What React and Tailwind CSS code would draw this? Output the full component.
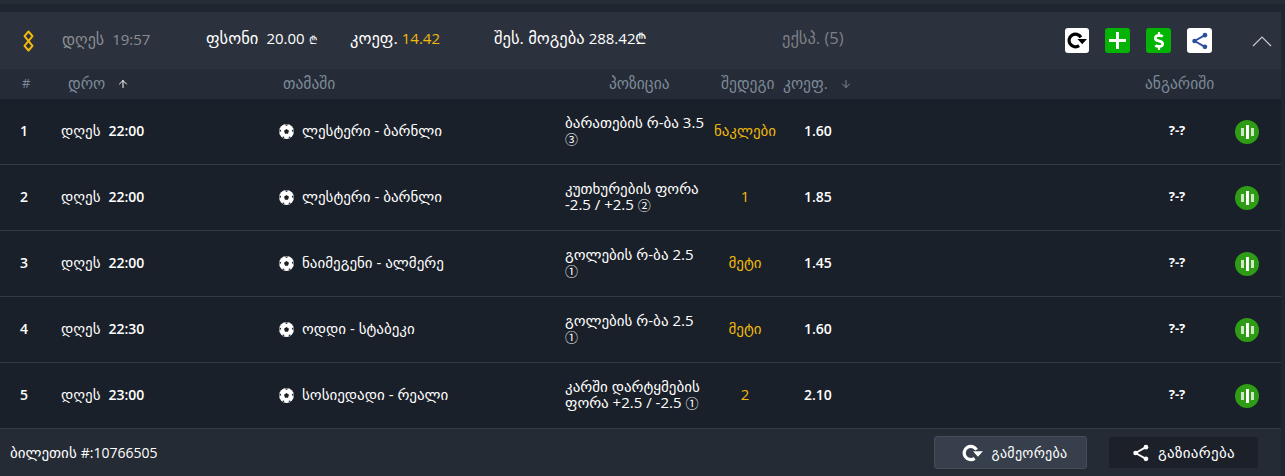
import React from 'react';
import { FaDollarSign } from 'react-icons/fa';
import { ArrowUp, ArrowDown } from 'lucide-react';

const rows = [
  { n: 1, day: 'დღეს', time: '22:00', game: 'ლესტერი - ბარნლი', pos: 'ბარათების რ-ბა 3.5\n', mark: '③', result: 'ნაკლები', odds: '1.60' },
  { n: 2, day: 'დღეს', time: '22:00', game: 'ლესტერი - ბარნლი', pos: 'კუთხურების ფორა\n-2.5 / +2.5 ', mark: '②', result: '1', odds: '1.85' },
  { n: 3, day: 'დღეს', time: '22:00', game: 'ნაიმეგენი - ალმერე', pos: 'გოლების რ-ბა 2.5\n', mark: '①', result: 'მეტი', odds: '1.45' },
  { n: 4, day: 'დღეს', time: '22:30', game: 'ოდდი - სტაბეკი', pos: 'გოლების რ-ბა 2.5\n', mark: '①', result: 'მეტი', odds: '1.60' },
  { n: 5, day: 'დღეს', time: '23:00', game: 'სოსიედადი - რეალი', pos: 'კარში დარტყმების\nფორა +2.5 / -2.5 ', mark: '①', result: '2', odds: '2.10' },
];

const Logo = () => (
  <svg width="13" height="22" viewBox="0 0 13 22" fill="none" stroke="#f0b90b" strokeWidth="2" strokeLinejoin="round">
    <path d="M6.5 1.5 L10.5 6.2 L2.5 15.8 L6.5 20.5 L10.5 15.8 L2.5 6.2 Z" />
  </svg>
);

const Bars = () => (
  <svg width="13" height="14" viewBox="0 0 13 14">
    <rect x="0" y="3" width="3" height="8" fill="#cfe6c8" />
    <rect x="5" y="0" width="3" height="14" fill="#ffffff" />
    <rect x="10" y="3" width="3" height="8" fill="#cfe6c8" />
  </svg>
);

const Redo = ({ size }) => (
  <svg width={size} height={size} viewBox="0 0 20 20" fill="currentColor">
    <path d="M11.5 14.87 A6 6 0 1 1 13.2 7" fill="none" stroke="currentColor" strokeWidth="3" />
    <path d="M10 8.5 L19 8.5 L14.5 13.5 Z" />
  </svg>
);

const Share = ({ size }) => (
  <svg width={size} height={size} viewBox="0 0 20 20" fill="currentColor" stroke="currentColor">
    <path d="M15.5 3.5 L4 10 L15.5 16.5" fill="none" strokeWidth="2" />
    <circle cx="15.5" cy="3.5" r="2.6" stroke="none" />
    <circle cx="4" cy="10" r="2.6" stroke="none" />
    <circle cx="15.5" cy="16.5" r="2.6" stroke="none" />
  </svg>
);

const Ball = () => (
  <svg className="mt-[2px]" width="15" height="15" viewBox="0 0 15 15">
    <circle cx="7.5" cy="7.5" r="7.5" fill="#ffffff" />
    <path d="M7.5 5 L10 6.8 L9 9.7 L6 9.7 L5 6.8 Z" fill="#1a2029" />
    <path d="M5.5 0.5 L9.5 0.5 L7.5 2 Z M14.5 5 L14.5 9 L12.8 6.5 Z M0.5 5 L0.5 9 L2.2 6.5 Z M3 13 L5.5 14.5 L5 12.5 Z M12 13 L9.5 14.5 L10 12.5 Z" fill="#1a2029" />
  </svg>
);

const Row = ({ row }) => (
  <div className="flex h-[66px] items-center border-b border-[#333945] bg-[#1a2029] pb-[2px] text-sm font-semibold text-white">
    <div className="w-[61px] pl-5">{row.n}</div>
    <div className="flex w-[218px] items-baseline gap-2">
      <span className="text-[15px] font-normal">{row.day}</span>
      <span>{row.time}</span>
    </div>
    <div className="flex w-[286px] items-center gap-2">
      <Ball />
      <span className="text-[15px] font-normal">{row.game}</span>
    </div>
    <div className="w-[146px] whitespace-pre-line text-[15px] font-normal leading-4">
      {row.pos}
      <span className="inline-block font-['Noto_Sans_CJK_SC'] text-[13px] leading-4">{row.mark}</span>
    </div>
    <div className="w-[68px] text-center text-[15px] font-normal text-[#f0b90b]">{row.result}</div>
    <div className="ml-[25px] w-[346px]">{row.odds}</div>
    <div className="w-[54px] text-center text-[13px] font-bold">?-?</div>
    <div className="ml-[31px] mt-[2px] flex h-6 w-6 items-center justify-center rounded-full bg-[#2e9c15]">
      <Bars />
    </div>
  </div>
);

export default function App() {
  return (
    <div className="h-[476px] w-[1285px] overflow-hidden bg-[#1f2630] font-['Open_Sans','DejaVu_Sans',sans-serif]">
      <div className="h-1 bg-[#262c36]" />
      <div className="mt-2 w-[1281px]">
        {/* ზედა ზოლი */}
        <div className="flex h-[57px] items-center bg-[#2c323d] text-[15px] font-medium text-white">
          <div className="ml-[22px] w-[40px]">
            <Logo />
          </div>
          <div className="-mt-1 flex w-[144px] items-baseline gap-2 text-[#8a8d93]">
            <span className="text-[16px]">დღეს</span>
            <span>19:57</span>
          </div>
          <div className="-mt-1 flex w-[144px] items-baseline gap-2">
            <span className="text-[16.5px]">ფსონი</span>
            <span>20.00</span>
            <span className="-ml-1 text-[11px]">₾</span>
          </div>
          <div className="-mt-1 flex w-[144px] items-baseline gap-1">
            <span className="text-[16.5px]">კოეფ.</span>
            <span className="text-[#f0b90b]">14.42</span>
          </div>
          <div className="-mt-1 flex w-[288px] items-baseline gap-1">
            <span className="text-[16.5px]">შეს. მოგება</span>
            <span>288.42₾</span>
          </div>
          <div className="-mt-1 w-[283px] text-[16.5px] text-[#7c8087]">ექსპ. (5)</div>
          <div className="flex items-center gap-4">
            <button className="flex h-[25px] w-6 items-center justify-center rounded-[3px] bg-white text-black">
              <Redo size={21} />
            </button>
            <button className="flex h-[25px] w-[25px] items-center justify-center rounded-[3px] bg-[#04b404] text-white">
              <svg width="19" height="19" viewBox="0 0 19 19" fill="white">
                <rect x="8" y="1" width="3" height="17" />
                <rect x="1" y="8" width="17" height="3" />
              </svg>
            </button>
            <button className="flex h-[25px] w-[25px] items-center justify-center rounded-[3px] bg-[#04b404] text-white">
              <FaDollarSign className="text-[18px]" />
            </button>
            <button className="flex h-[25px] w-[25px] items-center justify-center rounded-[3px] bg-white text-[#2b4f9c]">
              <Share size={18} />
            </button>
          </div>
          <svg className="ml-10" width="20" height="12" viewBox="0 0 20 12" fill="none" stroke="#c5c8ce" strokeWidth="1.2">
            <path d="M1 11 L10 2 L19 11" />
          </svg>
        </div>

        {/* ცხრილის სათაური */}
        <div className="flex h-[30px] items-center bg-[#262c37] text-[15.5px] text-[#7d8a99]">
          <div className="w-[68px] pl-[22px] text-[13px]">#</div>
          <div className="flex w-[215px] items-center gap-3">
            <span>დრო</span>
            <ArrowUp size={12} className="text-white" />
          </div>
          <div className="w-[326px]">თამაში</div>
          <div className="w-[112px]">პოზიცია</div>
          <div className="w-[62px]">შედეგი</div>
          <div className="flex w-[362px] items-center gap-3">
            <span>კოეფ.</span>
            <ArrowDown size={12} />
          </div>
          <div>ანგარიში</div>
        </div>

        {rows.map((row) => (
          <Row key={row.n} row={row} />
        ))}

        {/* ქვედა ზოლი */}
        <div className="flex h-[47px] items-center bg-[#252b35] text-sm font-medium text-white">
          <div className="flex items-baseline gap-1 pl-2.5">
            <span className="text-[15px]">ბილეთის</span>
            <span>#:10766505</span>
          </div>
          <div className="ml-auto mr-[22px] flex items-center gap-[21px]">
            <button className="flex h-[33px] w-[153px] items-center justify-center gap-2 rounded-[3px] border border-[#454d5a] bg-[#373f4c] pl-2 text-sm tracking-[0.3px]">
              <Redo size={22} />
              გამეორება
            </button>
            <button className="flex h-[33px] w-[151px] items-center justify-center gap-2 rounded-[3px] border border-[#262c36] bg-[#1c2029] text-[15px] tracking-[0.3px]">
              <Share size={18} />
              გაზიარება
            </button>
          </div>
        </div>
      </div>
    </div>
  );
}
